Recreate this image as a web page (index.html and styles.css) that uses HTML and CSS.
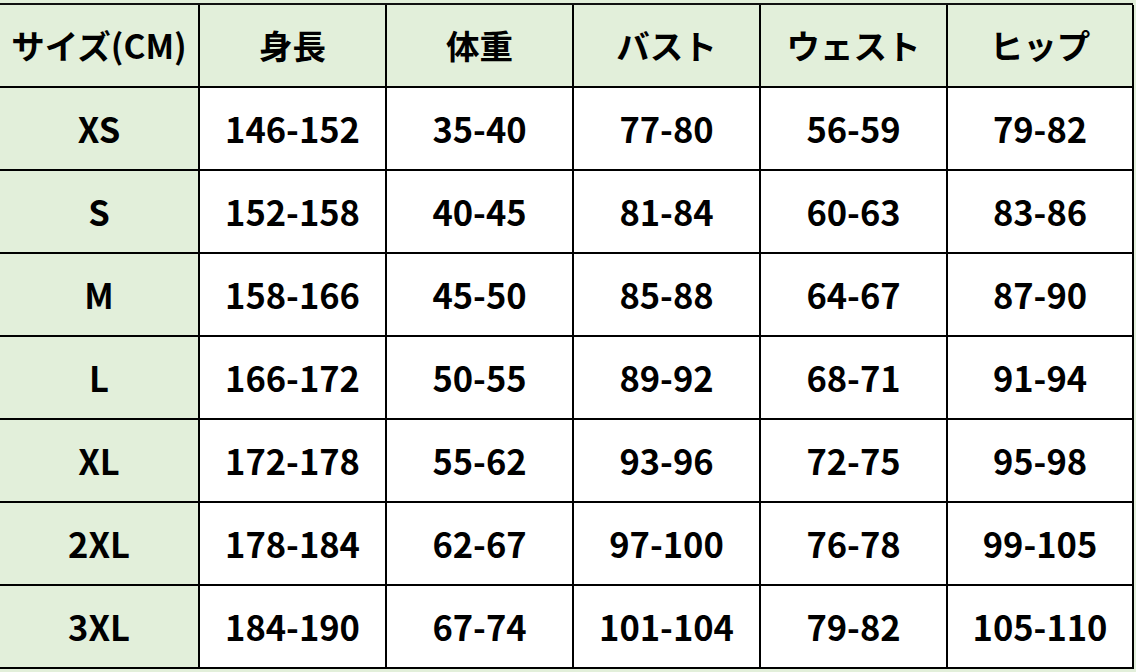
FILE: index.html
```html
<!DOCTYPE html>
<html lang="ja">
<head>
<meta charset="utf-8">
<title>サイズ表</title>
<link rel="stylesheet" href="styles.css">
</head>
<body>
<div class="size-table">
  <div class="cell head first">サイズ(CM)</div>
  <div class="cell head">身長</div>
  <div class="cell head">体重</div>
  <div class="cell head">バスト</div>
  <div class="cell head">ウェスト</div>
  <div class="cell head last">ヒップ</div>

  <div class="cell label first">XS</div>
  <div class="cell">146-152</div>
  <div class="cell">35-40</div>
  <div class="cell">77-80</div>
  <div class="cell">56-59</div>
  <div class="cell last">79-82</div>

  <div class="cell label first">S</div>
  <div class="cell">152-158</div>
  <div class="cell">40-45</div>
  <div class="cell">81-84</div>
  <div class="cell">60-63</div>
  <div class="cell last">83-86</div>

  <div class="cell label first">M</div>
  <div class="cell">158-166</div>
  <div class="cell">45-50</div>
  <div class="cell">85-88</div>
  <div class="cell">64-67</div>
  <div class="cell last">87-90</div>

  <div class="cell label first">L</div>
  <div class="cell">166-172</div>
  <div class="cell">50-55</div>
  <div class="cell">89-92</div>
  <div class="cell">68-71</div>
  <div class="cell last">91-94</div>

  <div class="cell label first">XL</div>
  <div class="cell">172-178</div>
  <div class="cell">55-62</div>
  <div class="cell">93-96</div>
  <div class="cell">72-75</div>
  <div class="cell last">95-98</div>

  <div class="cell label first">2XL</div>
  <div class="cell">178-184</div>
  <div class="cell">62-67</div>
  <div class="cell">97-100</div>
  <div class="cell">76-78</div>
  <div class="cell last">99-105</div>

  <div class="cell label first">3XL</div>
  <div class="cell">184-190</div>
  <div class="cell">67-74</div>
  <div class="cell">101-104</div>
  <div class="cell">79-82</div>
  <div class="cell last">105-110</div>
</div>
</body>
</html>
```

FILE: styles.css
```css
html, body {
  margin: 0;
  padding: 0;
  background: #e2efda;
}

body {
  font-family: "Noto Sans CJK JP", "Noto Sans", sans-serif;
  font-weight: bold;
  color: #000;
  overflow: hidden;
}

.size-table {
  display: grid;
  grid-template-columns: 198px repeat(4, 187px) 188px;
  grid-auto-rows: 83px;
  width: 1133px;
  margin-top: 3px;
  border-top: 2px solid #111;
}

.cell {
  box-sizing: border-box;
  display: flex;
  align-items: center;
  justify-content: center;
  background: #fff;
  border-left: 2px solid #000;
  border-bottom: 2px solid #000;
  font-size: 34.5px;
  line-height: 1;
  padding-bottom: 1px;
}

.cell.first {
  border-left: none;
}

.cell.last {
  border-right: 2px solid #000;
}

.cell.head,
.cell.label {
  background: #e2efda;
}

.cell.head {
  font-size: 33.5px;
}
```
